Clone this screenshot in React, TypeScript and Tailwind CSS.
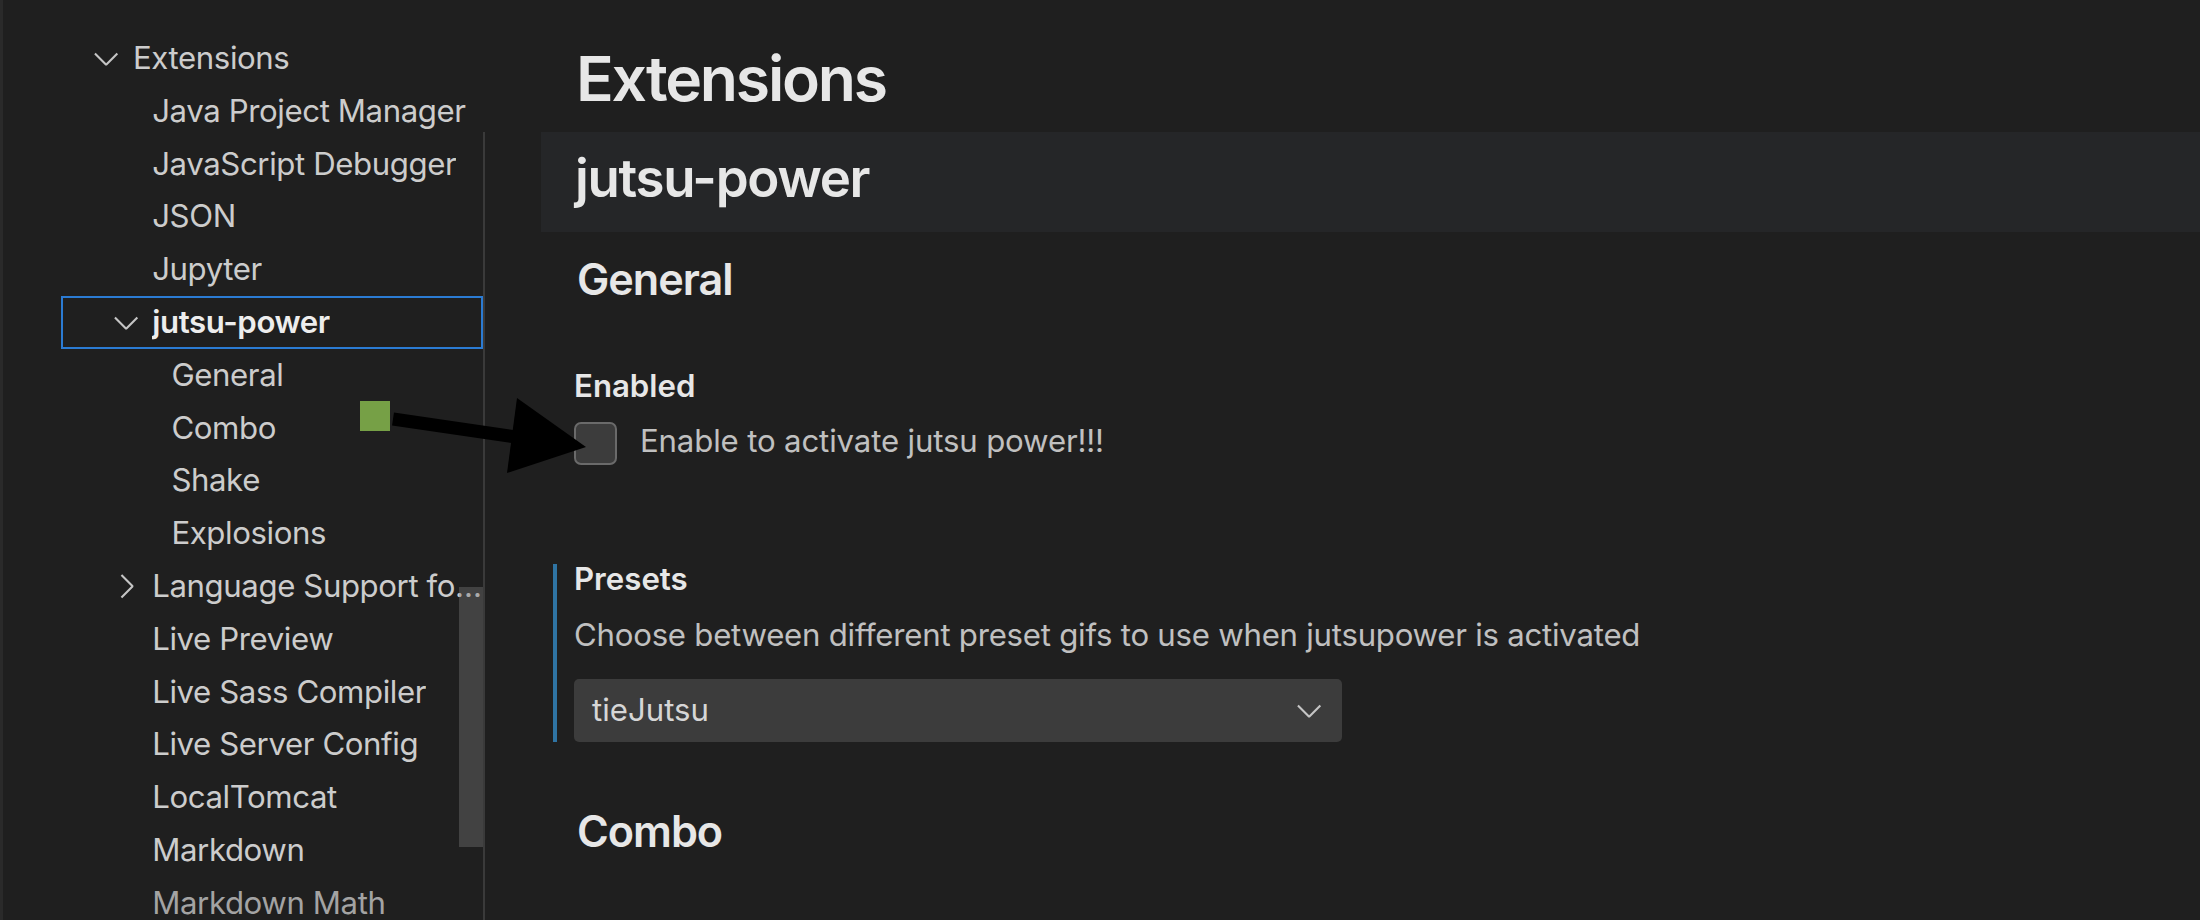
import React from "react";

const FONT = { fontFamily: 'Inter, "Noto Sans", "Liberation Sans", sans-serif' };

function ChevronDown({ className }: { className?: string }) {
  return (
    <svg viewBox="0 0 16 16" className={className} fill="currentColor">
      <path d="M7.976 10.072l4.357-4.357.62.618L8.284 11h-.618L3 6.333l.619-.618 4.357 4.357z" />
    </svg>
  );
}

function ChevronRight({ className }: { className?: string }) {
  return (
    <svg viewBox="0 0 16 16" className={className} fill="currentColor">
      <path d="M10.072 8.024L5.715 3.667l.618-.62L11 7.716v.618L6.333 13l-.618-.619 4.357-4.357z" />
    </svg>
  );
}

type Row = {
  label: string;
  level: 1 | 2 | 3;
  twistie?: "down" | "right";
  selected?: boolean;
  dim?: boolean;
};

const rows: Row[] = [
  { label: "Extensions", level: 1, twistie: "down" },
  { label: "Java Project Manager", level: 2 },
  { label: "JavaScript Debugger", level: 2 },
  { label: "JSON", level: 2 },
  { label: "Jupyter", level: 2 },
  { label: "jutsu-power", level: 2, twistie: "down", selected: true },
  { label: "General", level: 3 },
  { label: "Combo", level: 3 },
  { label: "Shake", level: 3 },
  { label: "Explosions", level: 3 },
  { label: "Language Support for Java(TM) by Red Hat", level: 2, twistie: "right" },
  { label: "Live Preview", level: 2 },
  { label: "Live Sass Compiler", level: 2 },
  { label: "Live Server Config", level: 2 },
  { label: "LocalTomcat", level: 2 },
  { label: "Markdown", level: 2 },
  { label: "Markdown Math", level: 2, dim: true },
];

function TreeRow({ row }: { row: Row }) {
  const pad =
    row.level === 1 ? "pl-[26.3px]" : row.level === 2 ? "pl-[45.5px]" : "pl-[64.7px]";
  const color = row.selected
    ? "text-[#ededed] font-semibold"
    : row.dim
    ? "text-[#a3a3a3]"
    : "text-[#cccccc]";
  return (
    <div
      className={`flex items-center h-[52.8px] shrink-0 ${pad} ${
        row.selected ? "ring-2 ring-inset ring-[#2b7bd3]" : ""
      }`}
    >
      <div className="w-[38.4px] h-[38.4px] shrink-0 flex items-center justify-center text-[#c5c5c5]">
        {row.twistie === "down" && <ChevronDown className="w-[38.4px] h-[38.4px]" />}
        {row.twistie === "right" && <ChevronRight className="w-[38.4px] h-[38.4px]" />}
      </div>
      <div
        className={`ml-[7.3px] min-w-0 truncate text-[31.2px] leading-[52.8px] tracking-[-0.013em] ${color}`}
      >
        {row.label}
      </div>
    </div>
  );
}

export default function App() {
  return (
    <div
      className="relative w-[2200px] h-[920px] overflow-hidden bg-[#1f1f1f] flex"
      style={FONT}
    >
      {/* Sidebar / table of contents */}
      <div className="relative w-[483px] shrink-0 h-full border-l-[3px] border-[#2a2a2a]">
        <div className="ml-[58px] w-[422px] pt-[32px] flex flex-col">
          {rows.map((r) => (
            <TreeRow key={r.label} row={r} />
          ))}
        </div>
        {/* scrollbar thumb */}
        <div className="absolute left-[456px] top-[587px] w-[24px] h-[260px] bg-[rgba(121,121,121,0.4)]" />
      </div>

      {/* Main settings column */}
      <div className="flex-1 min-w-0 flex flex-col">
        <div className="h-[132px] shrink-0 pl-[93px] pt-[41px]">
          <h1 className="text-[62.4px] leading-[75px] font-semibold tracking-[-0.035em] text-[#e7e7e7]">
            Extensions
          </h1>
        </div>

        <div className="flex-1 border-l-2 border-[#3a3a3a] pl-[56px] flex flex-col">
          <div className="h-[100px] shrink-0 bg-[#252628] pl-[34px] pt-[14px]">
            <div className="text-[52.8px] leading-[64px] font-semibold tracking-[-0.024em] text-[#e7e7e7]">
              jutsu-power
            </div>
          </div>

          <div className="mt-[21.3px] pl-[36px] text-[43.2px] leading-[52px] font-semibold tracking-[-0.024em] text-[#e7e7e7]">
            General
          </div>

          {/* Enabled setting */}
          <div className="mt-[60.4px] pl-[12px] flex">
            <div className="w-[4px] shrink-0" />
            <div className="pl-[17px] flex flex-col">
              <div className="text-[31.2px] leading-[40px] font-semibold text-[#e7e7e7]">
                Enabled
              </div>
              <div className="mt-[15.3px] flex items-start gap-[23px]">
                <div className="mt-[1px] w-[43px] h-[43px] shrink-0 rounded-[7px] border-2 border-[#6a6a6a] bg-[#3c3c3c]" />
                <div className="text-[31.2px] leading-[40px] tracking-[-0.005em] text-[#c0c0c0]">
                  Enable to activate jutsu power!!!
                </div>
              </div>
            </div>
          </div>

          {/* Presets setting */}
          <div className="mt-[99px] pl-[12px] flex">
            <div className="w-[4px] shrink-0 bg-[#2f74a3]" />
            <div className="pl-[17px] flex flex-col">
              <div className="text-[31.2px] leading-[30px] font-semibold text-[#e7e7e7]">
                Presets
              </div>
              <div className="mt-[20.7px] text-[31.2px] leading-[40px] tracking-[-0.008em] text-[#c0c0c0]">
                Choose between different preset gifs to use when jutsupower is activated
              </div>
              <div className="mt-[24.3px] w-[768px] h-[63px] rounded-[5px] bg-[#3c3c3c] flex items-center pl-[18px] pr-[14px]">
                <div className="flex-1 text-[31.2px] leading-[40px] text-[#d6d6d6]">
                  tieJutsu
                </div>
                <ChevronDown className="w-[38.4px] h-[38.4px] text-[#c5c5c5]" />
              </div>
            </div>
          </div>

          <div className="mt-[63.3px] pl-[36px] text-[43.2px] leading-[52px] font-semibold tracking-[-0.024em] text-[#e7e7e7]">
            Combo
          </div>
        </div>
      </div>

      {/* Annotation overlay: green marker and arrow */}
      <svg
        className="absolute left-0 top-0 w-[2200px] h-[920px] pointer-events-none"
        viewBox="0 0 2200 920"
      >
        <rect x="360" y="401" width="30" height="30" fill="#76a046" />
        <line x1="393" y1="419" x2="516" y2="437" stroke="#000" strokeWidth="13" />
        <polygon points="517,398 586,447 507,473" fill="#000" />
      </svg>
    </div>
  );
}
